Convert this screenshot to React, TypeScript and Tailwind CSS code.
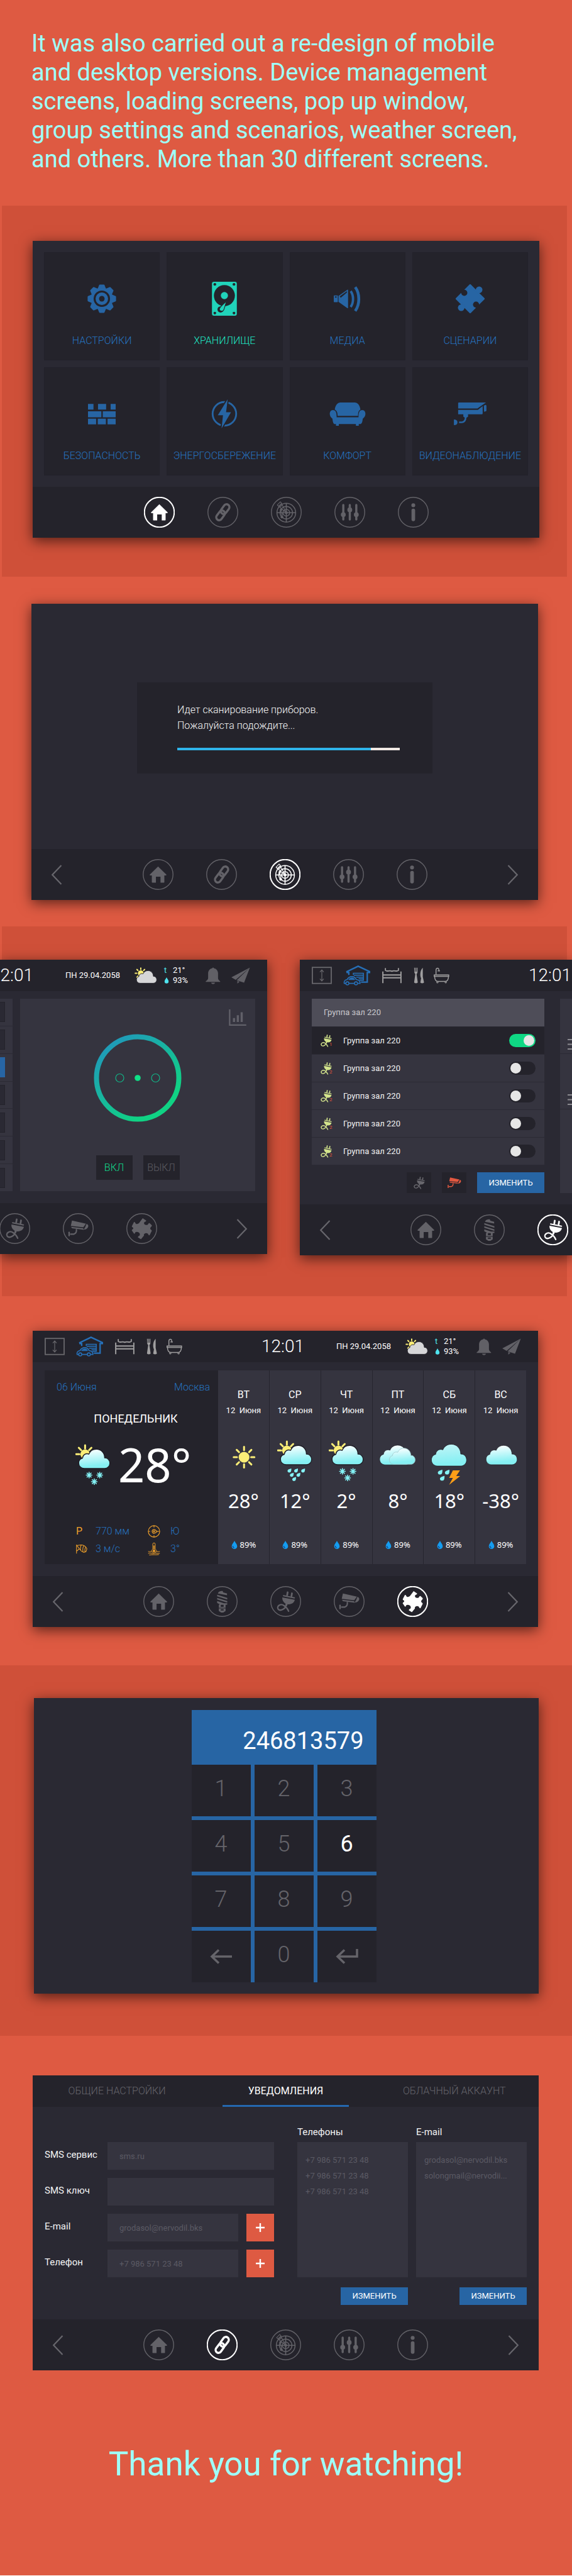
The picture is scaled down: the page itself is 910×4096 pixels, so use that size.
import React, { useId } from "react";

type IconProps = { className?: string };

/* ---------- navigation icons, drawn on a 64 unit circle ---------- */

const HomeGlyph = () => (
  <path
    fill="currentColor"
    d="M32 15.5 49 32c.8 1 .2 1.8-1 1.8h-3V48c0 .7-.4 1-1 1h-7V36.5h-9.500V49h-7.500c-.7 0-1-.4-1-1V33.800h-3c-1.200 0-1.800-.8-1-1.800z"
  />
);

const LinkGlyph = () => (
  <g fill="none" stroke="currentColor" strokeWidth="4.500" transform="rotate(-54 32 32)">
    <rect x="13" y="26" width="22" height="12" rx="6" />
    <rect x="29" y="26" width="22" height="12" rx="6" />
  </g>
);

const RadarGlyph = () => (
  <g fill="none" stroke="currentColor" strokeWidth="2">
    <circle cx="32" cy="33" r="19.500" />
    <circle cx="32" cy="33" r="13" />
    <circle cx="32" cy="33" r="7" />
    <circle cx="32" cy="33" r="3" fill="currentColor" stroke="none" />
    <path d="M32 13v40M12 33h40" strokeWidth="2.200" />
    <path d="M32 33 20 10M32 33 13 17M13 17l7-7M16 19l7-6M19 21l5-4" strokeWidth="1.400" />
    <circle cx="21" cy="27" r="2.400" fill="currentColor" stroke="none" />
    <circle cx="23" cy="42" r="2.800" fill="currentColor" stroke="none" />
    <path d="M21 27v6M23 42v-8" />
  </g>
);

const SlidersGlyph = () => (
  <g stroke="currentColor" strokeWidth="4.500" strokeLinecap="round" fill="currentColor">
    <path d="M18.500 17v30M32 17v30M45.500 17v30" />
    <circle cx="18.500" cy="37" r="2.800" />
    <circle cx="32" cy="27" r="2.800" />
    <circle cx="45.500" cy="37" r="2.800" />
  </g>
);

const InfoGlyph = () => (
  <g fill="currentColor">
    <circle cx="32" cy="17.500" r="4" />
    <rect x="28.300" y="24.500" width="7.500" height="26" rx="3.700" />
  </g>
);

const BulbGlyph = () => (
  <g fill="currentColor">
    <path d="M23 15.500c1-4 4-5.500 10-5.500l1 3 8 2.500v3.300z" />
    <path d="m21.500 18 21 6.500v3.300l-21-6.500zM21.500 24.500l21 6.500v3.300l-21-6.500z" />
    <path d="m21.500 31 14 4.500h7v3l-3.500.5v6H25v-6l2-1-5.500-3z" />
    <path d="M25 46.500h14V52l-3 1.500-1.500 1.500h-5L28 53.500 25 52z" />
    <path d="M29 39h6v4h-6zM29 48h6v2.500h-6z" className="fill-[#24232b]" />
  </g>
);

const PlugGlyph = () => (
  <g stroke="currentColor" fill="none" strokeLinecap="round">
    <path d="m36 13-1 6M45 15l-1 6" strokeWidth="3.600" />
    <path d="m27.500 20 22.500 4.500" strokeWidth="2.600" />
    <path
      fill="currentColor"
      stroke="none"
      d="m25 23.500 26 5C49.500 35 43 39 36 37.500l-1.500 4-3.500-.8.800-4.200C27 33.500 24.500 29 25 23.500z"
    />
    <path d="M33 39c-1 8-12 14-16.500 9-4-5.500 4-13 12-7.500C33 43.500 36 47 38 52" strokeWidth="3" />
  </g>
);

const DomeCameraGlyph = () => (
  <g fill="currentColor">
    <path d="M19 15.500 48 22l-5.500 7.500L16.500 26.500z" />
    <path d="M17 28.500 42 31.500l2 3-25-3z" />
    <path d="M49 22.500c4 .5 5 4.500 2.500 8-1.800 2.600-5 4-8 3.300L46.500 29z" />
    <path d="M28 33c1 5-1 9-5 10.500h-8" fill="none" stroke="currentColor" strokeWidth="2.800" />
    <rect x="11.500" y="38.500" width="3" height="9.500" rx="1" />
  </g>
);

const PieceGlyph = () => (
  <path
    fill="currentColor"
    d="m34 10.500 7.200 4.800-.4 1.600-3.300 1.600c-1.500 2.500-.5 4.500 1.300 5.300 2 .9 4.300.9 5.700 0l2-3 1.600-.2 4.900 4.600c-.1 3.500-3.400 3.800-3.300 7 .1 1.800 2.800 2 3.300 4.300L48.200 46l-1.700-.4-2-3.300c-2.500-1.500-5-1-6.800.5-1.600 1.400-1.400 2.600-.9 3.600L30.400 54.300 24 50.300l.6-2 3-2c1.400-2.500 0-5-1.700-6.200-2-1.400-5.300-1.800-7-.6l-1.700 3.300-1.400-.2-4.600-7c.6-2.600 3.400-2.500 3.400-4.300-.2-1.800-2.800-2-3.300-4l4.600-9 1.700.2 2 3.300c2.200 1.300 5 .6 6.800-1.200z"
  />
);

type GlyphName = "home" | "link" | "radar" | "sliders" | "info" | "bulb" | "plug" | "camera" | "piece";

const glyphs: Record<GlyphName, { label: string; draw: () => React.ReactElement }> = {
  home: { label: "Главная", draw: HomeGlyph },
  link: { label: "Связь", draw: LinkGlyph },
  radar: { label: "Сканирование", draw: RadarGlyph },
  sliders: { label: "Регуляторы", draw: SlidersGlyph },
  info: { label: "Информация", draw: InfoGlyph },
  bulb: { label: "Свет", draw: BulbGlyph },
  plug: { label: "Розетки", draw: PlugGlyph },
  camera: { label: "Камеры", draw: DomeCameraGlyph },
  piece: { label: "Сценарии", draw: PieceGlyph },
};

const systemNav: GlyphName[] = ["home", "link", "radar", "sliders", "info"];
const deviceNav: GlyphName[] = ["home", "bulb", "plug", "camera", "piece"];

function Chevron({ dir }: { dir: "left" | "right" }) {
  return (
    <button type="button" aria-label={dir === "left" ? "Назад" : "Вперёд"} className="text-[#67666c]">
      <svg viewBox="0 0 24 42" className="h-8 w-[18px]" fill="none" stroke="currentColor" strokeWidth="3">
        <path d={dir === "left" ? "M22 1 3 21l19 20" : "m2 1 19 20L2 41"} />
      </svg>
    </button>
  );
}

function NavBar({ items, active, arrows = true }: { items: GlyphName[]; active?: GlyphName; arrows?: boolean }) {
  return (
    <nav className="flex h-[81px] items-center justify-between bg-[#24232b] px-[31px]">
      {arrows ? <Chevron dir="left" /> : <span />}
      <div className="flex gap-[52px]">
        {items.map((name) => {
          const Draw = glyphs[name].draw;
          const on = name === active;
          return (
            <button key={name} type="button" aria-label={glyphs[name].label} className={on ? "text-white" : "text-[#636268]"}>
              <svg viewBox="0 0 64 64" className="size-[49px]">
                <circle cx="32" cy="32" r="31" fill="none" stroke="currentColor" strokeWidth={on ? 2.6 : 1.8} />
                <Draw />
              </svg>
            </button>
          );
        })}
      </div>
      {arrows ? <Chevron dir="right" /> : <span />}
    </nav>
  );
}

/* ---------- weather drawings ---------- */

const CLOUD =
  "M12 41C5 41 0 36 0 29.500 0 24 3.500 20 8 19 8.500 12 15 8 21.500 10.500 24 4 30 0 37.500 0 47.500 0 55 8 55 18.500 61.500 18 66 23.500 66 30 66 36 61 41 55 41z";

const rayAngles = [0, 45, 90, 135, 180, 225, 270, 315];

function Sun({ cx, cy, r, reach, angles = rayAngles }: { cx: number; cy: number; r: number; reach: number; angles?: number[] }) {
  return (
    <g fill="#fbee77" stroke="#fbee77">
      <circle cx={cx} cy={cy} r={r} stroke="none" />
      {angles.map((a) => (
        <path key={a} d={`M${cx} ${cy - reach + 7}V${cy - reach}`} strokeWidth="4" strokeLinecap="round" transform={`rotate(${a} ${cx} ${cy})`} />
      ))}
    </g>
  );
}

const Flake = ({ x, y }: { x: number; y: number }) => (
  <path
    transform={`translate(${x} ${y})`}
    stroke="#84f3f6"
    strokeWidth="2.200"
    strokeLinecap="round"
    d="M0-6V6M-6 0H6M-4.300-4.300 4.300 4.300M-4.300 4.300 4.300-4.300"
  />
);

const Drop = ({ x, y, s = 1 }: { x: number; y: number; s?: number }) => (
  <path transform={`translate(${x} ${y}) scale(${s})`} fill="#84f3f6" d="M4-4.500C4 1 3.500 4-.5 4-3.500 4-5 1-3.500-1.200-2.200-3 1-3.500 4-4.500z" />
);

type Sky = "sun" | "rain" | "snow" | "clouds" | "storm" | "cloud";

function SkyIcon({ kind, tall = true, className }: { kind: Sky; tall?: boolean; className: string }) {
  const id = useId();
  const fill = `url(#${id})`;
  const edge = { stroke: "#1d1c24", strokeWidth: 1 };
  return (
    <svg viewBox={tall ? "0 0 76 96" : "0 0 76 88"} className={className} aria-hidden="true">
      <defs>
        <linearGradient id={id} x1="0.4" y1="0" x2="0.55" y2="1">
          <stop offset="0.05" stopColor={kind === "storm" ? "#bdf4f6" : "#f6feff"} />
          <stop offset="0.85" stopColor="#86f0f3" />
        </linearGradient>
      </defs>
      {kind === "sun" && <Sun cx={39} cy={36} r={11.5} reach={22} />}
      {(kind === "rain" || kind === "snow") && (
        <>
          <Sun cx={20.500} cy={21.500} r={10} reach={19} angles={[0, 45, 270, 315]} />
          <path d={CLOUD} transform="translate(7 11)" fill={fill} {...edge} strokeWidth="1.800" />
        </>
      )}
      {kind === "rain" && (
        <>
          {[20, 34, 49].map((x) => (
            <Drop key={x} x={x + 6} y={64.500} />
          ))}
          <Drop x={31} y={73.500} />
          <Drop x={45} y={73.500} />
          <Drop x={36} y={82.500} />
        </>
      )}
      {kind === "snow" && (
        <>
          <Flake x={29} y={66} />
          <Flake x={51.500} y={66} />
          <Flake x={40} y={80} />
        </>
      )}
      {kind === "cloud" && <path d={CLOUD} transform="translate(7 11)" fill={fill} {...edge} />}
      {kind === "clouds" && (
        <>
          <path d={CLOUD} transform="translate(0 10.500) scale(1.020)" fill={fill} {...edge} />
          <path d={CLOUD} transform="translate(20.500 17) scale(.83)" fill={fill} stroke="#9dc7cb" strokeWidth="1.300" />
        </>
      )}
      {kind === "storm" && (
        <>
          <path d={CLOUD} transform="translate(.5 8.500) scale(1.130)" fill={fill} {...edge} />
          <Drop x={19} y={68} s={1.200} />
          <Drop x={34} y={68} s={1.200} />
          <Drop x={23.500} y={81} s={1.200} />
          <path fill="#ff9f17" d="M46 64h15l-8 12h8.500L38 94.500 46 80h-8z" />
        </>
      )}
    </svg>
  );
}

/* ---------- status header ---------- */

const rooms = [
  {
    name: "Лифт",
    tone: "text-[#68676c]",
    size: "h-7 w-8",
    box: "0 0 42 36",
    art: (
      <>
        <rect x="1.200" y="1.200" width="39.500" height="33.500" strokeWidth="2.400" />
        <path d="M21 7v22M17 11l4-4.500 4 4.500M17 25l4 4.500 4-4.500" strokeWidth="1.600" />
      </>
    ),
  },
  {
    name: "Гараж",
    tone: "text-[#2670b8]",
    size: "h-8 w-[43px]",
    box: "0 0 56 42",
    art: (
      <>
        <path d="M11.500 20V15H8l-.5-2L31 1.800 55 13v2h-5v20H37" strokeWidth="3" />
        <path d="M21 20v-3.500h21V31H34M22 20.500h20M27 24.500h15M32 28h10" strokeWidth="2" />
        <path d="M5 37.500H2c-1-5 1-7 6-8 3-5 6-6 10-6s7 1.500 9 6c5 1 8 2 8 8h-4.500M12 37.500h11" strokeWidth="2.200" />
        <path d="M11 30c2-3 4-4 7-4s5 1 6 4z" fill="currentColor" strokeWidth="1" />
        <circle cx="8.500" cy="37.500" r="3.200" strokeWidth="2" />
        <circle cx="26.500" cy="37.500" r="3.200" strokeWidth="2" />
      </>
    ),
  },
  {
    name: "Спальня",
    tone: "text-[#a09fa0]",
    size: "h-[26px] w-[31px]",
    box: "0 0 42 34",
    art: (
      <>
        <path d="M1.500 8.500v25M40.500 8.500v25M1.500 16h39M1.500 22h39" strokeWidth="2.600" />
        <path d="M7 1v5c4 4 8-1 14 2 6-3 10 2 14-2V1" strokeWidth="2.400" />
      </>
    ),
  },
  {
    name: "Кухня",
    tone: "text-[#a09fa0]",
    size: "h-[26px] w-[17px]",
    box: "0 0 22 34",
    art: (
      <g fill="currentColor" stroke="none">
        <path d="M1 1h1.500v8h1.200V1h1.600v8h1.200V1H8v9c0 2-1 3-2 4l2.500 17c.3 3-7.500 3-7.500 0l2.500-17c-1-1-2-2-2-4z" />
        <path d="M19 1v19l2.500 11c.5 3-8 3-7.500 0l1.500-8c-3-6-2-17 3.500-22z" />
      </g>
    ),
  },
  {
    name: "Ванная",
    tone: "text-[#a09fa0]",
    size: "h-[26px] w-[25px]",
    box: "0 0 34 34",
    art: (
      <>
        <path d="M1 16h31.500v3H1z" strokeWidth="2" />
        <path d="M2 19c0 7 3 11 8 11h14c5 0 8-4 8-11M5 15V5c0-5 7-5 6 1M8.500 7h5" strokeWidth="2" />
        <circle cx="8" cy="31.500" r="1.600" strokeWidth="1.500" />
        <circle cx="26" cy="31.500" r="1.600" strokeWidth="1.500" />
      </>
    ),
  },
];

function StatusHeader() {
  return (
    <header className="flex h-[50px] items-center bg-[#24232b] px-[19px] text-white">
      <div className="grid flex-1 grid-cols-[50px_62px_50px_32px_25px] items-center">
        {rooms.map((r) => (
          <button key={r.name} type="button" aria-label={r.name} className={r.tone}>
            <svg viewBox={r.box} className={r.size} fill="none" stroke="currentColor">
              {r.art}
            </svg>
          </button>
        ))}
      </div>
      <time className="w-[70px] text-center text-[28px] leading-8 font-light">12:01</time>
      <div className="flex flex-1 items-center justify-end pr-2">
        <span className="mr-[23px] text-[13px] leading-4">ПН 29.04.2058</span>
        <svg viewBox="0 0 47 34" className="mr-[11px] h-[26px] w-9" aria-hidden="true">
          <g fill="#fbee77" stroke="#fbee77" strokeLinecap="round" strokeWidth="2.600">
            <circle cx="13" cy="12.500" r="6" stroke="none" />
            <path d="M13 1.500v3M21 4.500l-2 2M5 4.500l2 2M1.500 12.500h3M5 20.500l2-2" />
          </g>
          <path d={CLOUD} transform="translate(4 7) scale(.64)" fill="#d6d6d8" stroke="#24232b" strokeWidth="2" />
        </svg>
        <dl className="mr-7 grid grid-cols-[14px_24px] text-[13px] leading-4">
          <dt className="text-[#4fe3ee]">t</dt>
          <dd>21°</dd>
          <dt className="flex items-center">
            <svg viewBox="0 0 10 14" className="h-[10px] w-2" fill="#4fe3ee" role="img" aria-label="Влажность">
              <path d="M5 0c2 4 4.500 6 4.500 9.200a4.500 4.500 0 0 1-9 0C.5 6 3 4 5 0z" />
            </svg>
          </dt>
          <dd>93%</dd>
        </dl>
        <button type="button" aria-label="Уведомления" className="mr-[17px] text-[#616066]">
          <svg viewBox="0 0 32 36" className="h-[27px] w-6" fill="currentColor">
            <path d="M14.500 2a1.500 1.500 0 0 1 3 0c6 1 9 6 9 11v10c0 3 2 5 4.500 6.500V31H.5v-1.500C3 28 5.500 26 5.500 23V13c0-5 3-10 9-11zM12 32.500h8c-.5 4-7.500 4-8 0z" />
          </svg>
        </button>
        <button type="button" aria-label="Отправить" className="text-[#616066]">
          <svg viewBox="0 0 39 34" className="h-[26px] w-[30px]" fill="currentColor">
            <path d="M38.500.5 0 21l9 5zM38.500.5 11 27l15.500 5zM38.500.5 10 26.500M12.500 28.500v5.500l4.500-4z" />
          </svg>
        </button>
      </div>
    </header>
  );
}

/* ---------- home tiles ---------- */

const HOLE = "fill-[#24232b]";

const Gear = () => (
  <svg viewBox="-30 -30 60 60" className="size-[46px]" fill="currentColor">
    <circle r="23" />
    {rayAngles.map((a) => (
      <path key={a} d="M-9-20-5.500-28.500Q-5-29.500-4-29.500H4q1 0 1.500 1L9-20z" transform={`rotate(${a})`} />
    ))}
    <circle r="17" className={HOLE} />
    <circle r="13" />
    <circle r="5.800" className={HOLE} />
  </svg>
);

const Disk = () => (
  <svg viewBox="0 0 52 71" className="h-[54px] w-10" fill="currentColor">
    <rect width="52" height="71" rx="4" />
    <g className={HOLE}>
      <circle cx="26" cy="29" r="22" />
      <circle cx="6" cy="5.500" r="2.800" />
      <circle cx="46" cy="5.500" r="2.800" />
      <circle cx="6" cy="65.500" r="2.800" />
      <circle cx="46" cy="65.500" r="2.800" />
      <circle cx="18" cy="58" r="6.500" />
    </g>
    <circle cx="26" cy="29" r="7.500" />
    <path d="M30.500 40.500 25 58c-1.500 5-10 4.500-9.500-1 .5-4 9-11 15-16.500z" className="stroke-[#24232b]" strokeWidth="1.500" />
  </svg>
);

const Speaker = () => (
  <svg viewBox="0 0 58 54" className="h-[41px] w-11" fill="currentColor">
    <rect x="0" y="19.500" width="8.500" height="14" rx="1" />
    <rect x="2.500" y="21.500" width="3.500" height="2.500" className={HOLE} />
    <path d="M10 20.500 28.500 7.500q1.500-.6 1.500 1v36.500q0 1.600-1.500 1L10 33z" />
    <path d="m12.500 21.500 15-11v3l-13 11z" className={HOLE} />
    <path d="M35.500 10.500c6.500 9 6.500 24 0 33" fill="none" stroke="currentColor" strokeWidth="5" />
    <path d="M45 2c10 14 10 36 0 50" fill="none" stroke="currentColor" strokeWidth="6" />
  </svg>
);

const Puzzle = () => (
  <svg viewBox="-32 -32 64 64" className="size-12" fill="currentColor">
    <path d="M0-29 29 0 0 29-29 0z" stroke="currentColor" strokeWidth="3.500" strokeLinejoin="round" />
    <circle cx="19" cy="-19" r="7" />
    <circle cx="-19" cy="19" r="7" />
    <g className={HOLE}>
      <circle cx="-12.500" cy="-12.500" r="6.500" />
      <path d="m-21-15 6-6 4 4-6 6z" />
      <circle cx="12.500" cy="12.500" r="6.500" />
      <path d="m21 15-6 6-4-4 6-6z" />
    </g>
  </svg>
);

const Bricks = () => (
  <svg viewBox="0 0 58 43" className="h-[33px] w-11" fill="currentColor">
    <path d="M0 0h11.500v12H0zM21 0h17v12H21zM47.500 0H58v12H47.500zM0 15.500h28V28H0zM31 15.500h27V28H31zM0 31h17v12H0zM20.500 31h17v12h-17zM41 31h17v12H41z" />
  </svg>
);

const Energy = () => (
  <svg viewBox="-32 -32 64 64" className="size-12" fill="currentColor">
    <circle r="25" fill="none" stroke="currentColor" strokeWidth="3.800" />
    <path
      d="M7-31 3.500-3.500H14L-6 31-3 3h-11z"
      className="stroke-[#24232b] [paint-order:stroke]"
      strokeWidth="5"
    />
  </svg>
);

const Sofa = () => (
  <svg viewBox="0 0 76 49" className="h-[37px] w-[58px]" fill="currentColor">
    <path d="M11 15C12 6 17 0 23 0h30c6 0 11 6 12 15-4 2-5 6-5 13H17c0-7-2-11-6-13z" />
    <path d="M7 16c6 0 8 5 8 15h46c0-10 2-15 8-15 8 0 9 13 1 18-1 8-2 11-6 11.500h-2.500V49h-6v-3.500h-36V49h-6v-3.500H11C8 45 7 42 6 34-2 29-1 16 7 16z" />
  </svg>
);

const Camera = () => (
  <svg viewBox="0 0 69 48" className="h-9 w-[52px]" fill="currentColor">
    <path d="M10 0h58L50 12.500H9V1zM9 15.500h42l10-8V23q0 2-2 2H9zM63.500 7l3-2q2.500 0 2.500 2v10q0 2-5 2.500zM20 25h10v5l-3 2h-4l-3-2z" />
    <path d="M25 30c0 8-3 11.500-8 12h-6" fill="none" stroke="currentColor" strokeWidth="3.500" />
    <path d="M0 36c5 0 7.500 2 7.500 6S5 48 0 48z" />
  </svg>
);

const tiles: { label: string; icon: () => React.ReactElement; active?: boolean }[] = [
  { label: "НАСТРОЙКИ", icon: Gear },
  { label: "ХРАНИЛИЩЕ", icon: Disk, active: true },
  { label: "МЕДИА", icon: Speaker },
  { label: "СЦЕНАРИИ", icon: Puzzle },
  { label: "БЕЗОПАСНОСТЬ", icon: Bricks },
  { label: "ЭНЕРГОСБЕРЕЖЕНИЕ", icon: Energy },
  { label: "КОМФОРТ", icon: Sofa },
  { label: "ВИДЕОНАБЛЮДЕНИЕ", icon: Camera },
];

const SHADOW = "shadow-[0_5px_20px_rgba(0,0,0,0.6)]";

function HomeScreen() {
  return (
    <div className={`bg-[#2a2933] ${SHADOW}`}>
      <div className="grid grid-cols-4 gap-[11px] p-[18px]">
        {tiles.map(({ label, icon: Icon, active }) => (
          <button
            key={label}
            type="button"
            className={`flex h-[172px] flex-col items-center border border-[#22212a] bg-[#24232b] pt-[43px] ${active ? "text-[#21d3ba]" : "text-[#2765a4]"}`}
          >
            <span className="flex h-[60px] items-center">
              <Icon />
            </span>
            <span className={`mt-[27px] text-[16px] leading-5 font-light ${active ? "text-[#1fe6c3]" : "text-[#2673c0]"}`}>{label}</span>
          </button>
        ))}
      </div>
      <NavBar items={systemNav} active="home" arrows={false} />
    </div>
  );
}

function ScanScreen() {
  return (
    <div className={`bg-[#2a2933] ${SHADOW}`}>
      <div className="px-[168px] pt-[125px] pb-[120px]">
        <div className="bg-[#24232b] pt-[31px] pr-[52px] pb-[37px] pl-16">
          <p className="text-[16px] leading-[25px] font-light text-[#f8f8f8]">
            Идет сканирование приборов.
            <br />
            Пожалуйста подождите...
          </p>
          <div role="progressbar" aria-valuenow={87} aria-label="Сканирование" className="mt-[23px] h-1 bg-[#f0e9e4]">
            <div className="h-1 w-[87%] bg-[#2fb4ea]" />
          </div>
        </div>
      </div>
      <NavBar items={systemNav} active="radar" />
    </div>
  );
}

/* ---------- socket control ---------- */

function SocketScreen() {
  return (
    <div className="w-[804px] shrink-0 bg-[#2a2933]">
      <StatusHeader />
      <div className="flex gap-3 px-[19px] pt-3 pb-[19px]">
        <ul className="grid flex-1 grid-rows-7 gap-px bg-[#2b2a34]">
          {[0, 1, 2, 3, 4, 5, 6].map((i) => (
            <li key={i} className="flex items-center justify-end bg-[#35343f] pr-[12px]">
              <span className={`h-8 w-9 border ${i === 2 ? "border-[#2765a4] bg-[#2765a4]" : "border-[#24232b] bg-[#2a2933]"}`} />
            </li>
          ))}
        </ul>
        <div className="flex w-[374px] flex-col items-center bg-[#35343f] pt-[17px] pb-[18px]">
          <button type="button" aria-label="Статистика" className="mr-3.5 self-end text-[#616069]">
            <svg viewBox="0 0 36 34" className="h-[26px] w-7" fill="none" stroke="currentColor">
              <path d="M1.500 0v32.500H36" strokeWidth="3" />
              <path d="M10.500 18v8M18.500 12v14M26.500 6v20" strokeWidth="4.500" />
            </svg>
          </button>
          <svg viewBox="-70 -70 140 140" className="mt-[13px] size-[140px]" fill="none" role="img" aria-label="Розетка">
            <defs>
              <linearGradient id="ring" x1="0.15" y1="0.1" x2="0.7" y2="0.85">
                <stop offset="0" stopColor="#1f9bb8" />
                <stop offset="1" stopColor="#10d284" />
              </linearGradient>
            </defs>
            <circle r="65.500" stroke="url(#ring)" strokeWidth="8" />
            <circle cx="-28.500" r="6.500" stroke="#12b487" strokeWidth="1.200" />
            <circle cx="28.500" r="6.500" stroke="#12b487" strokeWidth="1.200" />
            <circle r="4.800" fill="#0fe087" />
          </svg>
          <div className="mt-[53px] flex gap-[17px] text-[16px] font-light">
            <button type="button" className="h-[39px] w-[58px] bg-[#24232b] text-[#12dc8c]">
              ВКЛ
            </button>
            <button type="button" className="h-[39px] w-[58px] bg-[#24232b] text-[#5c5b62]">
              ВЫКЛ
            </button>
          </div>
        </div>
      </div>
      <NavBar items={deviceNav} />
    </div>
  );
}

/* ---------- group list ---------- */

const devices = [1, 2, 2, 2, 2];

const SmallPlug = ({ className }: IconProps) => (
  <svg viewBox="11 11 41 43" className={className}>
    <PlugGlyph />
  </svg>
);

function GroupScreen() {
  return (
    <div className="w-[804px] shrink-0 bg-[#2a2933]">
      <StatusHeader />
      <div className="flex gap-[25px] px-[19px] pt-3 pb-[18px]">
        <div className="w-[370px]">
          <h2 className="h-11 bg-[#4e4d58] px-[19px] text-[13px] leading-[43px] text-[#c9c9ce]">Группа зал 220</h2>
          <ul>
            {devices.map((n, i) => (
              <li
                key={i}
                className={`flex h-11 items-center border-t border-[#2b2a34] pr-3.5 pl-[13px] ${i === 0 ? "bg-[#24232b]" : "bg-[#35343f]"}`}
              >
                <span className="flex w-[37px] items-end text-[8px] leading-2 text-[#e2543d]">
                  <SmallPlug className="-mr-1 h-5 w-[19px] text-[#d3e48c]" />
                  {n}
                </span>
                <label htmlFor={`device-${i}`} className="flex-1 text-[13px] leading-4 text-[#f2f2f3]">
                  Группа зал 220
                </label>
                <input
                  id={`device-${i}`}
                  type="checkbox"
                  defaultChecked={i === 0}
                  className="flex h-[21px] w-[42px] appearance-none items-center rounded-full bg-[#24232b] px-0.5 before:size-[17px] before:rounded-full before:bg-[#e6e6e6] checked:justify-end checked:bg-[#0fd884]"
                />
              </li>
            ))}
          </ul>
          <div className="mt-3 flex justify-end gap-[17px]">
            <button type="button" aria-label="Розетки" className="flex h-[33px] w-[39px] items-center justify-center bg-[#24232b] text-[#68676d]">
              <SmallPlug className="h-5 w-[19px]" />
            </button>
            <button type="button" aria-label="Камеры" className="flex h-[33px] w-[39px] items-center justify-center bg-[#24232b] text-[#e25840]">
              <svg viewBox="10 13 45 37" className="h-[19px] w-6">
                <DomeCameraGlyph />
              </svg>
            </button>
            <button type="button" className="h-[33px] w-[107px] bg-[#2765a4] text-[13px] text-white">
              ИЗМЕНИТЬ
            </button>
          </div>
        </div>
        <ul className="flex-1 bg-[#35343f]">
          {[0, 1].map((i) => (
            <li key={i} className="flex h-[88px] items-end border-b border-[#2b2a34] pb-1.5 pl-3">
              <svg viewBox="0 0 20 17" className="h-[17px] w-5" stroke="#8b8a90" strokeWidth="2" aria-hidden="true">
                <path d="M0 1h20M0 8.500h20M0 16h20" />
              </svg>
            </li>
          ))}
        </ul>
      </div>
      <NavBar items={deviceNav} active="plug" />
    </div>
  );
}

/* ---------- weather ---------- */

const week: { day: string; sky: Sky; temp: string }[] = [
  { day: "ВТ", sky: "sun", temp: "28°" },
  { day: "СР", sky: "rain", temp: "12°" },
  { day: "ЧТ", sky: "snow", temp: "2°" },
  { day: "ПТ", sky: "clouds", temp: "8°" },
  { day: "СБ", sky: "storm", temp: "18°" },
  { day: "ВС", sky: "cloud", temp: "-38°" },
];

const CompassIcon = () => (
  <svg viewBox="0 0 26 26" className="size-5" fill="none" stroke="#f0a12b" strokeWidth="1.500">
    <circle cx="13" cy="13" r="11.800" />
    <path d="M13 1v4M13 21v4M1 13h4M24 13h-5l-4-3.500a4 4 0 1 0 0 7l5-3.500" />
    <circle cx="13" cy="13" r="1.500" />
  </svg>
);

const WindsockIcon = () => (
  <svg viewBox="0 0 24 20" className="h-[15px] w-[18px]" fill="none" stroke="#f0a12b" strokeWidth="1.400">
    <path d="M1 19V1l6 8-6 5M1 2l10-1.300c5 .3 10 4 12 8.300l-2 6-5 1.500c-3-1-6-3.500-9-7.500M11 1c-2 3-2 7-1 12M16 3c-2 4-2 9-1 13M20 6c-1.500 3-1.500 6-1 9" />
  </svg>
);

const ThermometerIcon = () => (
  <svg viewBox="0 0 26 26" className="size-5" fill="none" stroke="#f0a12b" strokeWidth="1.300">
    <path d="M10.500 13V3a2.500 2.500 0 0 1 5 0v10a4.500 4.500 0 1 1-5 0zM1 18c3 1.500 5-.5 7 0M18 18c2-.5 4 1.500 7 0M1 22c6-2 8 1.500 12 0s6 1 12 0M3 25.500c6-1.500 14 0 20-1" />
    <circle cx="13" cy="17" r="2" fill="#f0a12b" />
    <path d="M13 6v9" strokeWidth="2" />
  </svg>
);

function WeatherScreen() {
  return (
    <div className={`bg-[#2a2933] ${SHADOW}`}>
      <StatusHeader />
      <div className="flex px-[19px] pt-[13px] pb-[19px]">
        <section className="w-[276px] bg-[#24232b] pt-[17px] pb-3.5">
          <div className="flex justify-between pr-[13px] pl-[19px] text-[16px] leading-5 font-light text-[#2673c0]">
            <span>06 Июня</span>
            <span>Москва</span>
          </div>
          <h2 className="mt-7 pl-3.5 text-center text-[18px] leading-6 text-white">ПОНЕДЕЛЬНИК</h2>
          <div className="mt-7 flex h-[66px] items-center gap-[11px] pl-[49px]">
            <SkyIcon kind="snow" tall={false} className="h-[66px] w-[57px]" />
            <span className="font-['Noto_Sans',sans-serif] text-[74px] leading-[62px] text-white">28°</span>
          </div>
          <div className="mt-[63px] grid grid-cols-[31px_83px_36px_auto] items-center gap-y-2 pl-[50px] text-[16px] leading-5 font-light text-[#2673c0]">
            <span className="font-normal text-[#f0a12b]">P</span>
            <span>770 мм</span>
            <CompassIcon />
            <span>Ю</span>
            <WindsockIcon />
            <span>3 м/с</span>
            <ThermometerIcon />
            <span>3°</span>
          </div>
        </section>
        <ul className="grid flex-1 grid-cols-6 gap-px bg-[#26252e]">
          {week.map(({ day, sky, temp }) => (
            <li key={day} className="flex flex-col items-center bg-[#35343f] pt-[29px] text-white">
              <span className="text-[16px] leading-5">{day}</span>
              <span className="mt-[7px] text-[13px] leading-4 whitespace-pre">12  Июня</span>
              <SkyIcon kind={sky} className="mt-[39px] h-[72px] w-[57px]" />
              <span className="mt-2 font-['Noto_Sans',sans-serif] text-[31px] leading-8">{temp}</span>
              <span className="mt-[46px] flex items-center gap-1 font-['Noto_Sans',sans-serif] text-[13px] leading-4">
                <svg viewBox="0 0 13 18" className="h-[13px] w-[10px]" role="img" aria-label="Влажность">
                  <path fill="#159df0" d="M6.500 0C9 5 12.500 8 12.500 12a6 6 0 0 1-12 0C.5 8 4 5 6.500 0z" />
                  <path fill="none" stroke="#123e86" strokeWidth="1.500" d="M3 11c0 2.500 1 4 3 4.500" />
                </svg>
                89%
              </span>
            </li>
          ))}
        </ul>
      </div>
      <NavBar items={deviceNav} active="piece" />
    </div>
  );
}

/* ---------- keypad ---------- */

const keys = ["1", "2", "3", "4", "5", "6", "7", "8", "9", "back", "0", "enter"];

function KeypadScreen() {
  return (
    <div className={`flex justify-center bg-[#2a2933] pt-[19px] pr-2 pb-[18px] ${SHADOW}`}>
      <div className="w-[294px] bg-[#2765a4]">
        <input
          aria-label="Код"
          readOnly
          value="246813579"
          className="block h-[87px] w-full bg-transparent pt-[11px] pr-5 text-right text-[38px] leading-[44px] text-white outline-none"
        />
        <div className="grid grid-cols-3 gap-1.5">
          {keys.map((k) => (
            <button
              key={k}
              type="button"
              aria-label={k === "back" ? "Стереть" : k === "enter" ? "Ввод" : k}
              className={`flex h-[82px] items-center justify-center bg-[#24232b] text-[36px] leading-[44px] ${k === "6" ? "text-white" : "font-light text-[#65646a]"}`}
            >
              {k === "back" || k === "enter" ? (
                <svg viewBox="0 0 36 24" className="h-6 w-9" fill="none" stroke="currentColor" strokeWidth="3.500">
                  <path d={k === "back" ? "M14 1.500 3 12l11 10.500M3 12h32" : "M14 1.500 3 12l11 10.500M3 12h31V0"} />
                </svg>
              ) : (
                <span className="pb-1.5">{k}</span>
              )}
            </button>
          ))}
        </div>
      </div>
    </div>
  );
}

/* ---------- notification settings ---------- */

const fields = [
  { id: "sms-service", label: "SMS сервис", value: "sms.ru", add: false },
  { id: "sms-key", label: "SMS ключ", value: "", add: false },
  { id: "email", label: "E-mail", value: "grodasol@nervodil.bks", add: true },
  { id: "phone", label: "Телефон", value: "+7 986 571 23 48", add: true },
];

const lists = [
  { title: "Телефоны", items: ["+7 986 571 23 48", "+7 986 571 23 48", "+7 986 571 23 48"] },
  { title: "E-mail", items: ["grodasol@nervodil.bks", "solongmail@nervodii..."] },
];

const tabs = ["ОБЩИЕ НАСТРОЙКИ", "УВЕДОМЛЕНИЯ", "ОБЛАЧНЫЙ АККАУНТ"];

function NotificationsScreen() {
  return (
    <div className="bg-[#2a2933]">
      <div className="grid h-[50px] grid-cols-3 bg-[#24232b]">
        {tabs.map((t, i) => (
          <button
            key={t}
            type="button"
            className={`mx-auto w-[201px] border-b-3 pt-0.5 text-[16px] whitespace-nowrap ${i === 1 ? "border-[#2468b0] text-white" : "border-transparent font-light text-[#66656c]"}`}
          >
            {t}
          </button>
        ))}
      </div>
      <div className="grid grid-cols-2 gap-[37px] px-[19px] pt-[30px] pb-[23px]">
        <form className="flex flex-col gap-[13px] pt-[26px]">
          {fields.map((f) => (
            <div key={f.id} className="flex h-11 items-center">
              <label htmlFor={f.id} className="w-[100px] shrink-0 pb-1 text-[15px] leading-5 text-[#f4f4f5]">
                {f.label}
              </label>
              <input
                id={f.id}
                defaultValue={f.value}
                className="h-11 min-w-0 flex-1 bg-[#35343f] px-[19px] text-[13px] text-[#5b5a64] outline-none"
              />
              {f.add && (
                <button type="button" aria-label={`Добавить ${f.label}`} className="ml-[13px] flex size-11 items-center justify-center bg-[#de5a42]">
                  <svg viewBox="0 0 14 14" className="size-3.5" stroke="#fff" strokeWidth="2.400">
                    <path d="M7 0v14M0 7h14" />
                  </svg>
                </button>
              )}
            </div>
          ))}
        </form>
        <div className="grid grid-cols-2 gap-[13px]">
          {lists.map((l) => (
            <section key={l.title} className="flex flex-col">
              <h3 className="text-[15px] leading-5 text-[#f4f4f5]">{l.title}</h3>
              <ul className="mt-1.5 h-[215px] bg-[#35343f] px-[13px] pt-4 text-[13px] leading-[25px] text-[#5b5a64]">
                {l.items.map((item, i) => (
                  <li key={i}>{item}</li>
                ))}
              </ul>
              <button type="button" className="mt-4 h-7 w-[107px] self-end bg-[#2765a4] text-[13px] text-white">
                ИЗМЕНИТЬ
              </button>
            </section>
          ))}
        </div>
      </div>
      <NavBar items={systemNav} active="link" />
    </div>
  );
}

export default function App() {
  return (
    <main className="overflow-x-hidden bg-[#de5a42] font-[Roboto,sans-serif]">
      <h1 className="pr-6 pb-[51px] pl-[50px] pt-[46px] text-[38px] leading-[46px] text-[#9ffff8]">
        It was also carried out a re-design of mobile
        <br />
        and desktop versions. Device management
        <br />
        screens, loading screens, pop up window,
        <br />
        group settings and scenarios, weather screen,
        <br />
        and others. More than 30 different screens.
      </h1>
      <section className="mr-2 ml-[3px] bg-[#cf5039] pt-14 pr-11 pb-[62px] pl-[49px]">
        <HomeScreen />
      </section>
      <section className="pt-[43px] pr-[54px] pb-[42px] pl-[50px]">
        <ScanScreen />
      </section>
      <section className="border-r-8 border-l-3 border-[#de5a42] bg-[#cf5039] pt-[53px] pb-[65px]">
        <div className="-mr-2 -ml-[3px] grid grid-cols-[425fr_433fr] items-start gap-[52px]">
          <div className={`flex min-w-0 justify-end overflow-hidden ${SHADOW}`}>
            <SocketScreen />
          </div>
          <div className={`flex min-w-0 overflow-hidden ${SHADOW}`}>
            <GroupScreen />
          </div>
        </div>
      </section>
      <section className="pt-[55px] pr-[54px] pb-[61px] pl-[52px]">
        <WeatherScreen />
      </section>
      <section className="bg-[#cf5039] pt-[52px] pr-[53px] pb-[67px] pl-[54px]">
        <KeypadScreen />
      </section>
      <section className="pt-[63px] pr-[53px] pl-[52px]">
        <NotificationsScreen />
      </section>
      <p className="pt-[119px] pb-[147px] text-center text-[53px] leading-[60px] text-[#9ffff8]">Thank you for watching!</p>
    </main>
  );
}
